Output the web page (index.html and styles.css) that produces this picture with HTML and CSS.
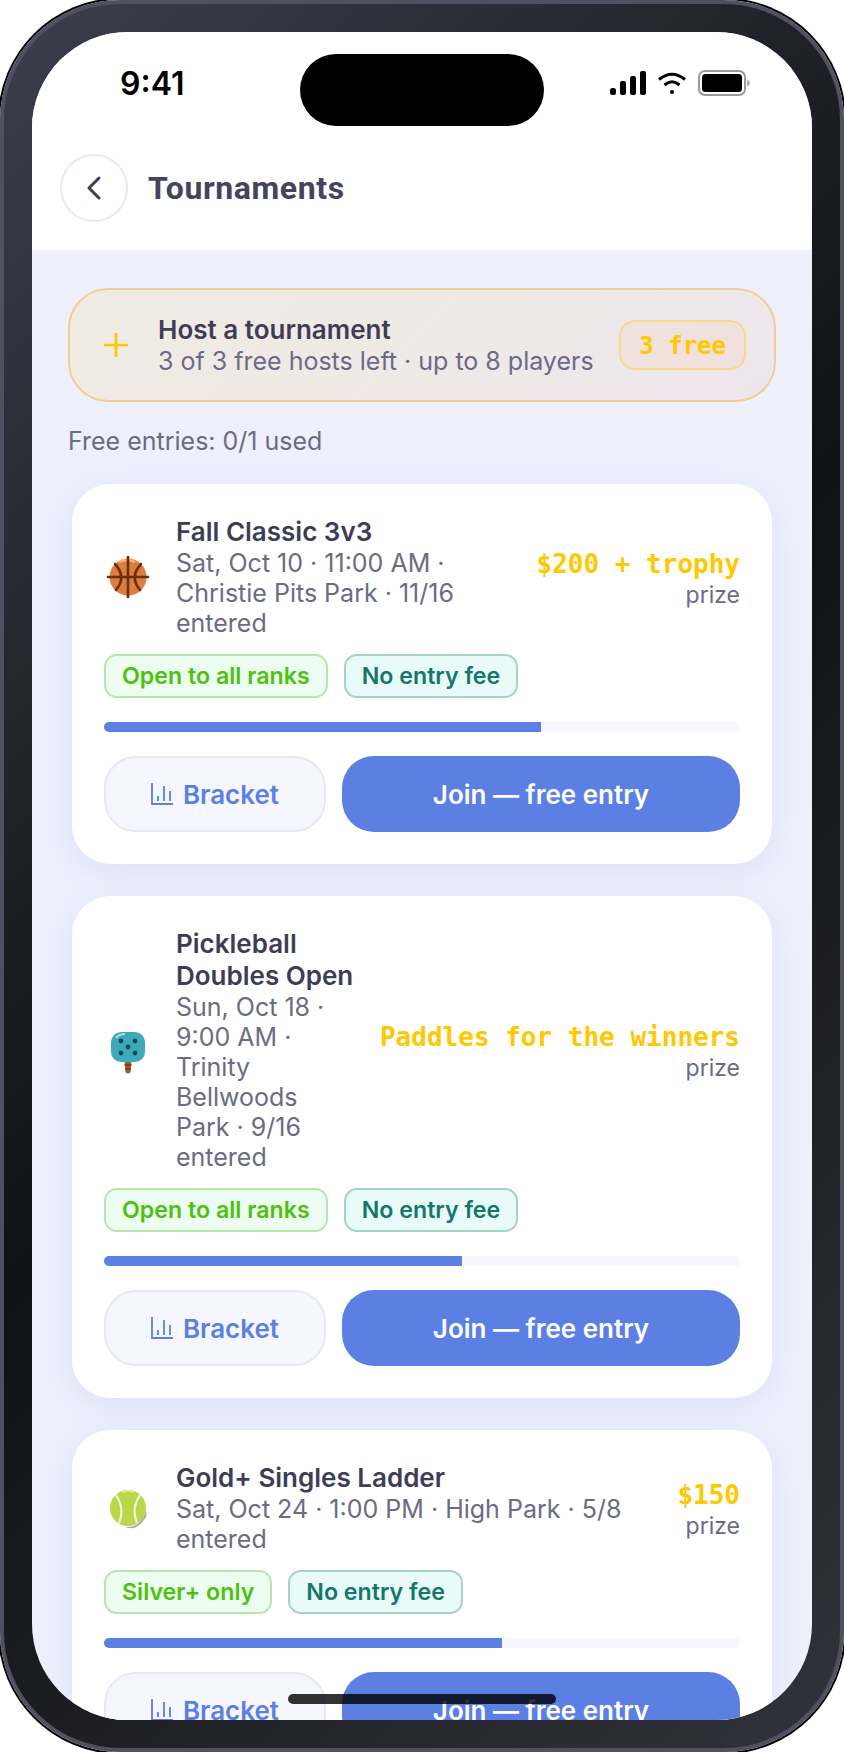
FILE: index.html
```html
<!DOCTYPE html>
<html lang="en">
<head>
    <meta charset="UTF-8">
    <meta name="viewport" content="width=device-width, initial-scale=1.0">
    <title>Tournaments</title>
    <link rel="stylesheet" href="styles.css">
</head>
<body>
    <div class="phone">
        <div class="screen">
            <div class="island"></div>

            <div class="statusBar">
                <span class="time">9:41</span>
                <div class="statusIcons">
                    <svg width="36" height="24" viewBox="0 0 36 24" fill="#000">
                        <rect x="0" y="17" width="6" height="7" rx="2.5"/>
                        <rect x="10" y="10" width="6" height="14" rx="2"/>
                        <rect x="20" y="5" width="6" height="19" rx="2"/>
                        <rect x="30" y="0" width="6" height="24" rx="2"/>
                    </svg>
                    <svg width="28" height="22" viewBox="0 0 28 22" fill="none" stroke="#000" stroke-width="3">
                        <path d="M1 7.5 Q14 -3 27 7.5"/>
                        <path d="M6.5 13 Q14 6.5 21.5 13"/>
                        <circle cx="14" cy="20" r="2" fill="#000" stroke="none"/>
                    </svg>
                    <svg width="52" height="26" viewBox="0 0 52 26">
                        <rect x="1" y="1" width="46" height="24" rx="6" fill="none" stroke="#999" stroke-width="2"/>
                        <rect x="4" y="4" width="40" height="18" rx="3.5" fill="#000"/>
                        <path d="M49 9.5 Q52 11 52 13 Q52 15 49 16.5 Z" fill="#aaa"/>
                    </svg>
                </div>
            </div>

            <header class="topBar">
                <button class="backBtn">
                    <svg width="16" height="26" viewBox="0 0 16 26" fill="none" stroke="#3d3d55" stroke-width="3" stroke-linecap="round" stroke-linejoin="round">
                        <path d="M13 3 L3 13 L13 23"/>
                    </svg>
                </button>
                <h1 class="pageTitle">Tournaments</h1>
            </header>

            <main class="content">
                <div class="hostBanner">
                    <svg class="plusIcon" width="24" height="24" viewBox="0 0 24 24" stroke="#ffc800" stroke-width="2.6">
                        <path d="M12 0 V24 M0 12 H24"/>
                    </svg>
                    <div class="hostText">
                        <div class="cardTitle">Host a tournament</div>
                        <div class="meta">3 of 3 free hosts left · up to 8 players</div>
                    </div>
                    <span class="freeBadge">3 free</span>
                </div>

                <p class="freeEntries">Free entries: 0/1 used</p>

                <!-- Fall Classic -->
                <section class="card">
                    <div class="cardTop">
                        <svg class="sportIcon" width="48" height="48" viewBox="0 0 48 48">
                            <circle cx="24.5" cy="24.5" r="18.5" fill="#e8dcd0"/>
                            <circle cx="24" cy="24" r="18.5" fill="#e07d38"/>
                            <path d="M15 9 Q23 5 31 9" fill="none" stroke="#f3b48c" stroke-width="2.4"/>
                            <g fill="none" stroke="#6a2f10" stroke-width="2.6" stroke-linecap="round">
                                <path d="M24 4 V44"/>
                                <path d="M4 24 H44"/>
                                <path d="M11 11 Q23 24 12 37"/>
                                <path d="M37 11 Q25 24 36 37"/>
                            </g>
                        </svg>
                        <div class="cardInfo">
                            <div class="cardTitle">Fall Classic 3v3</div>
                            <div class="meta">Sat, Oct 10 · 11:00 AM · Christie Pits Park · 11/16 entered</div>
                        </div>
                        <div class="prize">
                            <div class="prizeValue">$200 + trophy</div>
                            <div class="prizeLabel">prize</div>
                        </div>
                    </div>
                    <div class="chips">
                        <span class="chip chipRank">Open to all ranks</span>
                        <span class="chip chipFee">No entry fee</span>
                    </div>
                    <div class="progress"><div class="progressFill" style="width: 68.75%"></div></div>
                    <div class="actions">
                        <button class="bracketBtn">
                            <svg width="22" height="22" viewBox="0 0 22 22" fill="none" stroke="#5b7fe3" stroke-width="1.8">
                                <path d="M1 0 V21 H22"/>
                                <path d="M7 13 V18 M13 3 V18 M19 8 V18"/>
                            </svg>
                            Bracket
                        </button>
                        <button class="joinBtn">Join — free entry</button>
                    </div>
                </section>

                <!-- Pickleball -->
                <section class="card">
                    <div class="cardTop">
                        <svg class="sportIcon" width="48" height="48" viewBox="0 0 48 48">
                            <path d="M20.5 34 H27.5 L26.5 46 Q24 49 21.5 46 Z" fill="#a5592a"/>
                            <path d="M20.5 39 H27.5 M21 43 H27" stroke="#6e3a1a" stroke-width="1.5"/>
                            <rect x="7" y="6" width="34" height="30" rx="10" fill="#3fa9b9"/>
                            <path d="M12 12 Q15 8 21 8" fill="none" stroke="#a8dbe3" stroke-width="2"/>
                            <g fill="#0e4a55">
                                <circle cx="17" cy="15" r="2.4"/>
                                <circle cx="31" cy="15" r="2.4"/>
                                <circle cx="24" cy="21" r="2.4"/>
                                <circle cx="17" cy="27" r="2.4"/>
                                <circle cx="31" cy="27" r="2.4"/>
                            </g>
                        </svg>
                        <div class="cardInfo">
                            <div class="cardTitle">Pickleball Doubles Open</div>
                            <div class="meta">Sun, Oct 18 · 9:00 AM · Trinity Bellwoods Park · 9/16 entered</div>
                        </div>
                        <div class="prize">
                            <div class="prizeValue">Paddles for the winners</div>
                            <div class="prizeLabel">prize</div>
                        </div>
                    </div>
                    <div class="chips">
                        <span class="chip chipRank">Open to all ranks</span>
                        <span class="chip chipFee">No entry fee</span>
                    </div>
                    <div class="progress"><div class="progressFill" style="width: 56.25%"></div></div>
                    <div class="actions">
                        <button class="bracketBtn">
                            <svg width="22" height="22" viewBox="0 0 22 22" fill="none" stroke="#5b7fe3" stroke-width="1.8">
                                <path d="M1 0 V21 H22"/>
                                <path d="M7 13 V18 M13 3 V18 M19 8 V18"/>
                            </svg>
                            Bracket
                        </button>
                        <button class="joinBtn">Join — free entry</button>
                    </div>
                </section>

                <!-- Gold singles -->
                <section class="card">
                    <div class="cardTop">
                        <svg class="sportIcon" width="48" height="48" viewBox="0 0 48 48">
                            <path d="M21 43 Q37 44 42 26 L42.5 32 Q34 48 21 43 Z" fill="#b0b0a8"/>
                            <circle cx="24" cy="24" r="18" fill="#b9d84a"/>
                            <path d="M18 8 Q24 6 30 8" fill="none" stroke="#dcef9a" stroke-width="2"/>
                            <g fill="none" stroke="#f2f7de" stroke-width="2">
                                <path d="M12 11 Q21 24 15 39"/>
                                <path d="M36 11 Q27 24 33 39"/>
                            </g>
                        </svg>
                        <div class="cardInfo">
                            <div class="cardTitle">Gold+ Singles Ladder</div>
                            <div class="meta">Sat, Oct 24 · 1:00 PM · High Park · 5/8 entered</div>
                        </div>
                        <div class="prize">
                            <div class="prizeValue">$150</div>
                            <div class="prizeLabel">prize</div>
                        </div>
                    </div>
                    <div class="chips">
                        <span class="chip chipRank">Silver+ only</span>
                        <span class="chip chipFee">No entry fee</span>
                    </div>
                    <div class="progress"><div class="progressFill" style="width: 62.5%"></div></div>
                    <div class="actions">
                        <button class="bracketBtn">
                            <svg width="22" height="22" viewBox="0 0 22 22" fill="none" stroke="#5b7fe3" stroke-width="1.8">
                                <path d="M1 0 V21 H22"/>
                                <path d="M7 13 V18 M13 3 V18 M19 8 V18"/>
                            </svg>
                            Bracket
                        </button>
                        <button class="joinBtn">Join — free entry</button>
                    </div>
                </section>
            </main>

            <div class="homeIndicator"></div>
        </div>
    </div>
</body>
</html>
```

FILE: styles.css
```css
/* Reset default styles */
* {
  margin: 0;
  padding: 0;
  box-sizing: border-box;
}

body {
  font-family: Inter, "Liberation Sans", sans-serif;
  color: #3d3d55;
  background-color: white;
  overflow: hidden;
}

button {
  font-family: inherit;
  border: none;
  cursor: pointer;
}

/* Device frame */
.phone {
  width: 844px;
  height: 1752px;
  padding: 28px;
  border: 4px solid #505060;
  border-radius: 120px;
  background: linear-gradient(135deg, #3c3e4c 0%, #101114 50%, #32323c 100%);
  box-shadow: 0 0 0 2px #000;
}

.screen {
  position: relative;
  width: 780px;
  height: 1688px;
  overflow: hidden;
  border-radius: 96px;
  background-color: #eef0fc;
}

.island {
  position: absolute;
  top: 22px;
  left: 268px;
  width: 244px;
  height: 72px;
  border-radius: 36px;
  background-color: #000;
}

.homeIndicator {
  position: absolute;
  bottom: 16px;
  left: 256px;
  width: 268px;
  height: 10px;
  border-radius: 5px;
  background-color: rgba(0, 0, 0, 0.8);
}

/* Status bar */
.statusBar {
  display: flex;
  justify-content: space-between;
  align-items: center;
  height: 102px;
  padding: 0 62px 0 88px;
  background-color: white;
}

.time {
  font-size: 32px;
  font-weight: 600;
  color: #000;
}

.statusIcons {
  display: flex;
  align-items: center;
  gap: 12px;
}

/* Page header */
.topBar {
  display: flex;
  align-items: center;
  gap: 20px;
  padding: 20px 28px 28px;
  background-color: white;
}

.backBtn {
  display: flex;
  align-items: center;
  justify-content: center;
  width: 68px;
  height: 68px;
  border: 2px solid #e8e8f4;
  border-radius: 50%;
  background-color: white;
}

.pageTitle {
  font-family: Roboto, sans-serif;
  font-size: 32px;
  font-weight: 700;
  letter-spacing: 0.6px;
  color: #44445c;
}

.content {
  padding: 38px 36px;
}

/* Host banner */
.hostBanner {
  display: flex;
  align-items: center;
  height: 114px;
  padding: 0 28px 0 34px;
  border: 2px solid #efcf95;
  border-radius: 40px;
  background: linear-gradient(135deg, rgba(255, 200, 0, 0.1), rgba(255, 120, 60, 0.08));
}

.plusIcon {
  flex-shrink: 0;
  margin-right: 30px;
}

.hostText {
  flex: 1;
}

.cardTitle {
  font-size: 26px;
  font-weight: 600;
  line-height: 32px;
}

.meta {
  font-size: 25px;
  line-height: 30px;
  color: #6b6b85;
}

.freeBadge {
  display: flex;
  align-items: center;
  height: 50px;
  padding: 2px 18px 0;
  border: 2px solid rgba(255, 200, 0, 0.35);
  border-radius: 16px;
  background-color: rgba(255, 160, 60, 0.08);
  font-family: "DejaVu Sans Mono", monospace;
  font-size: 24px;
  font-weight: 700;
  color: #ffc800;
}

.freeEntries {
  margin: 24px 0 28px;
  font-size: 25px;
  line-height: 30px;
  color: #6b6b85;
}

/* Tournament cards */
.card {
  margin: 0 4px 32px;
  padding: 32px;
  border-radius: 38px;
  background-color: white;
  box-shadow: 0 8px 32px rgba(91, 127, 227, 0.12);
}

.cardTop {
  display: flex;
  align-items: center;
  gap: 24px;
}

.sportIcon {
  flex-shrink: 0;
}

.cardInfo {
  flex: 1;
}

.prize {
  flex-shrink: 0;
  padding-top: 4px;
  text-align: right;
}

.prizeValue {
  font-family: "DejaVu Sans Mono", monospace;
  font-size: 26px;
  font-weight: 700;
  line-height: 32px;
  color: #ffc800;
}

.prizeLabel {
  font-size: 23px;
  line-height: 30px;
  color: #6b6b85;
}

.chips {
  display: flex;
  gap: 16px;
  margin-top: 16px;
}

.chip {
  display: flex;
  align-items: center;
  height: 44px;
  padding: 0 16px;
  border: 2px solid;
  border-radius: 13px;
  font-size: 23.2px;
  font-weight: 600;
}

.chipRank {
  border-color: #b4e8a8;
  background-color: #edfdf2;
  color: #4cc20f;
}

.chipFee {
  border-color: #a5d3c6;
  background-color: #e9fbf8;
  color: #13786b;
}

.progress {
  height: 10px;
  margin-top: 24px;
  overflow: hidden;
  border-radius: 5px;
  background-color: #f5f6fe;
}

.progressFill {
  height: 100%;
  background-color: #5b7fe3;
}

.actions {
  display: flex;
  gap: 16px;
  margin-top: 24px;
}

.bracketBtn, .joinBtn {
  display: flex;
  align-items: center;
  justify-content: center;
  height: 76px;
  border-radius: 32px;
  font-size: 26px;
  font-weight: 600;
}

.bracketBtn {
  width: 222px;
  gap: 10px;
  border: 2px solid #e8e8f4;
  background-color: #f5f6fe;
  color: #5b7fe3;
}

.joinBtn {
  flex: 1;
  background-color: #5b7fe3;
  color: white;
}
```
